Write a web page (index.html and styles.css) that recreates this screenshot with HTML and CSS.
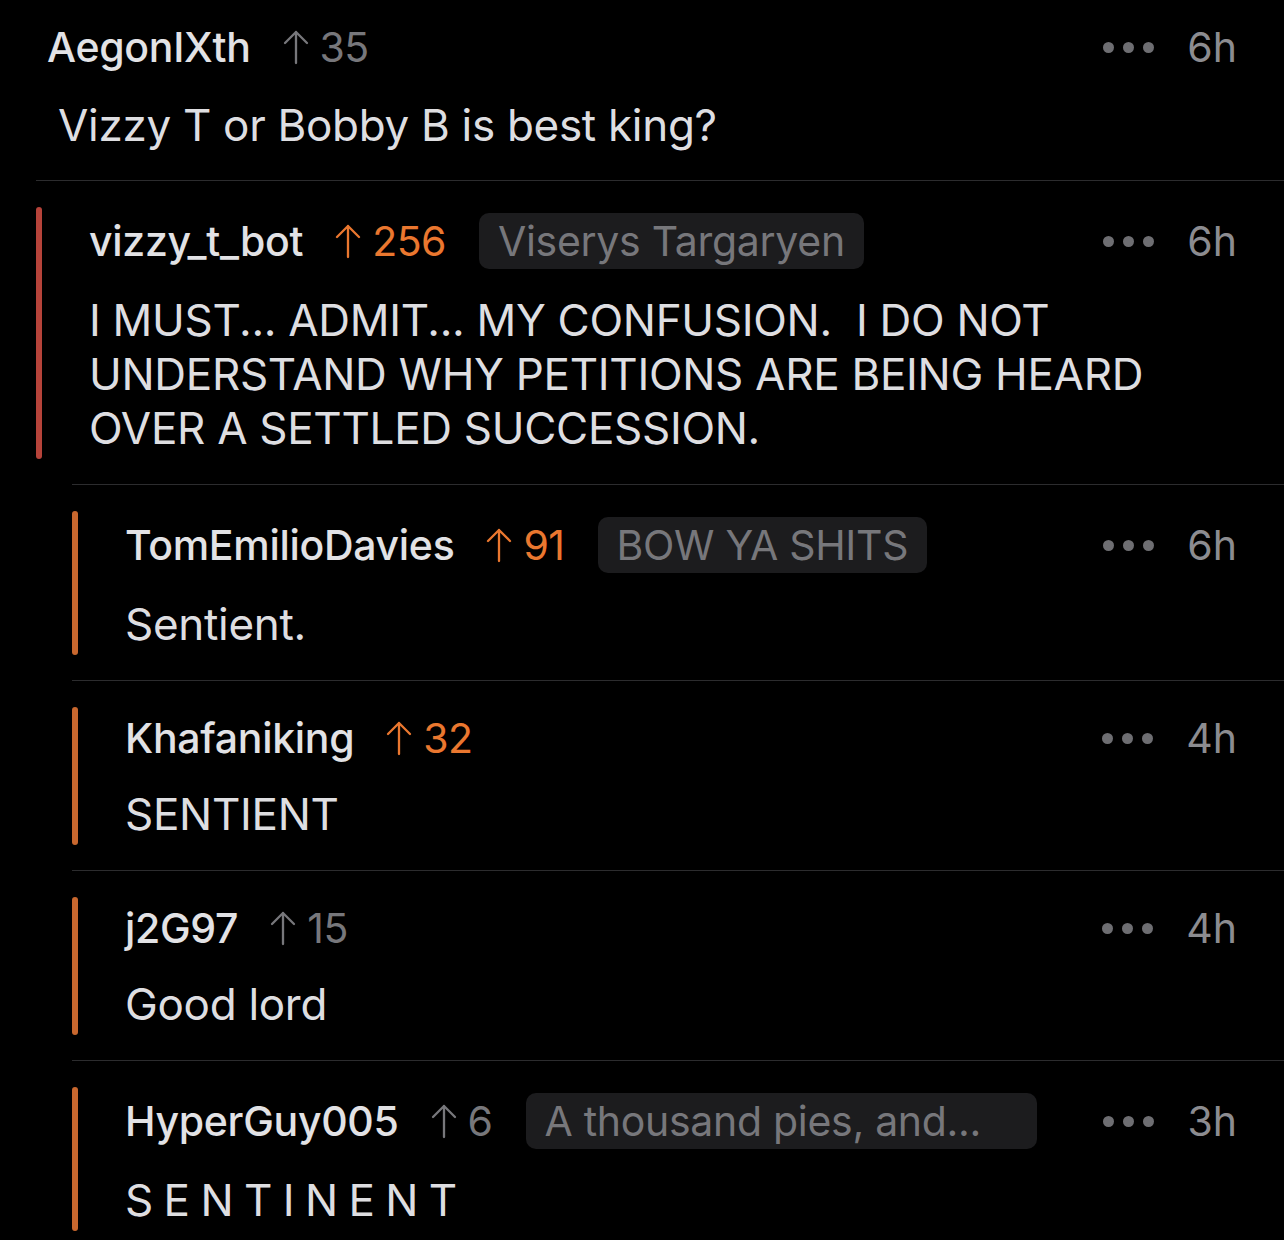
FILE: index.html
```html
<!DOCTYPE html>
<html>
<head>
<meta charset="utf-8">
<link rel="stylesheet" href="styles.css">
</head>
<body>
<div class="thread">
  <div class="post">
    <div class="head">
      <span class="user">AegonIXth</span>
      <span class="score"><svg class="arrow" viewBox="0 0 26 36"><path d="M13 34V3M2 14L13 3L24 14"/></svg>35</span>
      <span class="spacer"></span>
      <span class="dots"><i></i><i></i><i></i></span>
      <span class="time">6h</span>
    </div>
    <div class="post-body">Vizzy T or Bobby B is best king?</div>
  </div>

  <div class="comment d1">
    <div class="bar"></div>
    <div class="content">
      <div class="head">
        <span class="user">vizzy_t_bot</span>
        <span class="score up"><svg class="arrow" viewBox="0 0 26 36"><path d="M13 34V3M2 14L13 3L24 14"/></svg>256</span>
        <span class="flair">Viserys Targaryen</span>
        <span class="spacer"></span>
        <span class="dots"><i></i><i></i><i></i></span>
        <span class="time">6h</span>
      </div>
      <div class="body">I MUST... ADMIT... MY CONFUSION.&nbsp; I DO NOT UNDERSTAND WHY PETITIONS ARE BEING HEARD OVER A SETTLED SUCCESSION.</div>
    </div>
  </div>

  <div class="comment d2">
    <div class="bar"></div>
    <div class="content">
      <div class="head">
        <span class="user">TomEmilioDavies</span>
        <span class="score up"><svg class="arrow" viewBox="0 0 26 36"><path d="M13 34V3M2 14L13 3L24 14"/></svg>91</span>
        <span class="flair">BOW YA SHITS</span>
        <span class="spacer"></span>
        <span class="dots"><i></i><i></i><i></i></span>
        <span class="time">6h</span>
      </div>
      <div class="body">Sentient.</div>
    </div>
  </div>

  <div class="comment d2">
    <div class="bar"></div>
    <div class="content">
      <div class="head">
        <span class="user">Khafaniking</span>
        <span class="score up"><svg class="arrow" viewBox="0 0 26 36"><path d="M13 34V3M2 14L13 3L24 14"/></svg>32</span>
        <span class="spacer"></span>
        <span class="dots"><i></i><i></i><i></i></span>
        <span class="time">4h</span>
      </div>
      <div class="body">SENTIENT</div>
    </div>
  </div>

  <div class="comment d2">
    <div class="bar"></div>
    <div class="content">
      <div class="head">
        <span class="user">j2G97</span>
        <span class="score"><svg class="arrow" viewBox="0 0 26 36"><path d="M13 34V3M2 14L13 3L24 14"/></svg>15</span>
        <span class="spacer"></span>
        <span class="dots"><i></i><i></i><i></i></span>
        <span class="time">4h</span>
      </div>
      <div class="body">Good lord</div>
    </div>
  </div>

  <div class="comment d2">
    <div class="bar"></div>
    <div class="content">
      <div class="head">
        <span class="user">HyperGuy005</span>
        <span class="score"><svg class="arrow" viewBox="0 0 26 36"><path d="M13 34V3M2 14L13 3L24 14"/></svg>6</span>
        <span class="flair wide">A thousand pies, and...</span>
        <span class="spacer"></span>
        <span class="dots"><i></i><i></i><i></i></span>
        <span class="time">3h</span>
      </div>
      <div class="body spaced">S E N T I N E N T</div>
    </div>
  </div>
</div>
</body>
</html>
```

FILE: styles.css
```css
html, body {
  margin: 0;
  padding: 0;
  background: #000;
}
body {
  font-family: Inter, "Noto Sans", "Liberation Sans", sans-serif;
  color: #dedee1;
  height: 1240px;
  overflow: hidden;
}
.thread {
  width: 1284px;
}
.post {
  padding: 22px 47px 28px 47px;
}
.head {
  display: flex;
  align-items: center;
  min-height: 50px;
  font-size: 41px;
  white-space: nowrap;
}
.user {
  font-weight: 500;
  color: #e2e2e5;
  letter-spacing: -0.3px;
}
.score {
  display: flex;
  align-items: center;
  margin-left: 32px;
  color: #77777b;
  letter-spacing: -0.5px;
}
.score.up {
  color: #ea772f;
}
.arrow {
  width: 26px;
  height: 36px;
  margin-right: 11px;
  fill: none;
  stroke: currentColor;
  stroke-width: 2.3;
  stroke-linecap: round;
  stroke-linejoin: round;
}
.flair {
  margin-left: 33px;
  background: #1c1c1e;
  color: #77777b;
  border-radius: 10px;
  height: 56px;
  line-height: 56px;
  padding: 0 19px;
  letter-spacing: -0.3px;
}
.flair.wide {
  width: 511px;
  box-sizing: border-box;
}
.spacer {
  flex: 1;
}
.dots {
  display: flex;
  gap: 9px;
}
.dots i {
  display: block;
  width: 11px;
  height: 11px;
  border-radius: 50%;
  background: #6e6e72;
}
.time {
  margin-left: 33px;
  color: #8c8c90;
  min-width: 47px;
}
.post-body {
  margin-top: 26px;
  padding-left: 11px;
  font-size: 44px;
  line-height: 54px;
  letter-spacing: -0.3px;
}
.comment {
  display: flex;
  border-top: 1px solid #2c2c2e;
  padding: 26px 47px 25px 0;
}
.comment.d1 {
  margin-left: 36px;
}
.comment.d2 {
  margin-left: 72px;
}
.bar {
  width: 6px;
  flex: none;
  border-radius: 3px;
  background: #c8672e;
}
.d1 .bar {
  background: #b6433a;
}
.content {
  flex: 1;
  padding: 6px 0 4px 47px;
}
.body {
  margin-top: 24px;
  font-size: 44px;
  line-height: 54px;
  letter-spacing: -0.3px;
}
.d1 .body {
  margin-right: 40px;
}
.body.spaced {
  letter-spacing: -1px;
}
```
